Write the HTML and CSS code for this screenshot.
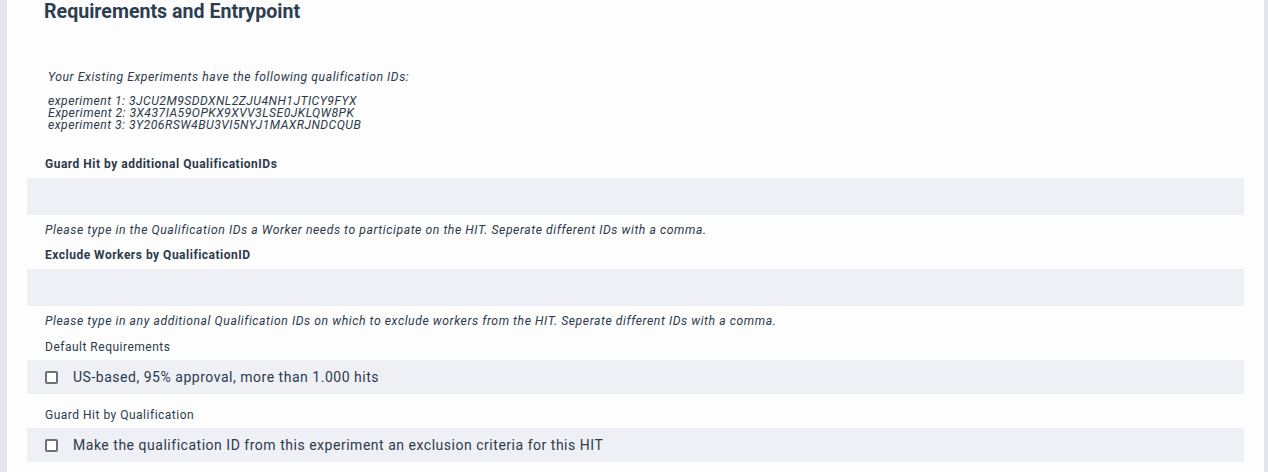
FILE: index.html
```html
<!DOCTYPE html>
<html>
<head>
<meta charset="utf-8">
<link rel="stylesheet" href="styles.css">
</head>
<body>
<div class="page">
  <section class="card">
    <h2 class="title">Requirements and Entrypoint</h2>
    <div class="existing">
      <p class="existing-head">Your Existing Experiments have the following qualification IDs:</p>
      <p class="existing-list">experiment 1: 3JCU2M9SDDXNL2ZJU4NH1JTICY9FYX<br>Experiment 2: 3X437IA59OPKX9XVV3LSE0JKLQW8PK<br>experiment 3: 3Y206RSW4BU3VI5NYJ1MAXRJNDCQUB</p>
    </div>
    <div class="fields">
      <div class="field">
        <label class="field-label">Guard Hit by additional QualificationIDs</label>
        <div class="input"></div>
        <p class="help">Please type in the Qualification IDs a Worker needs to participate on the HIT. Seperate different IDs with a comma.</p>
      </div>
      <div class="field">
        <label class="field-label">Exclude Workers by QualificationID</label>
        <div class="input"></div>
        <p class="help">Please type in any additional Qualification IDs on which to exclude workers from the HIT. Seperate different IDs with a comma.</p>
      </div>
      <div class="check-group">
        <div class="group-label">Default Requirements</div>
        <div class="check-row"><span class="box"></span><span class="check-text">US-based, 95% approval, more than 1.000 hits</span></div>
      </div>
      <div class="check-group">
        <div class="group-label">Guard Hit by Qualification</div>
        <div class="check-row"><span class="box"></span><span class="check-text">Make the qualification ID from this experiment an exclusion criteria for this HIT</span></div>
      </div>
    </div>
  </section>
</div>
</body>
</html>
```

FILE: styles.css
```css
html, body {
  margin: 0;
  padding: 0;
  background: #e5e6ed;
  font-family: Roboto, "Liberation Sans", sans-serif;
  color: #2c3a4b;
}
.page {
  padding: 0 4px 0 7px;
  height: 472px;
  overflow: hidden;
}
.card {
  background: #fdfdfd;
  height: 100%;
  padding: 0 20px;
  box-sizing: border-box;
}
.title {
  margin: 0;
  padding: 0 0 0 17px;
  font-size: 19.6px;
  font-weight: 700;
  line-height: 24px;
  color: #2c3e50;
}
.existing {
  padding: 46px 0 0 21px;
  font-style: italic;
  font-size: 12.2px;
  color: #2c3a4b;
}
.existing p { margin: 0; }
.existing-head { line-height: 14px; letter-spacing: 0.55px; }
.existing-list { margin-top: 11px !important; line-height: 12px; letter-spacing: 0.46px; }
.fields {
  margin-top: 25px;
}
.field-label {
  display: block;
  padding: 0 0 6px 18px;
  font-size: 12px;
  font-weight: 700;
  line-height: 16px;
  letter-spacing: 0.5px;
  color: #2c3a4b;
}
.input {
  height: 37px;
  background: #eff0f5;
}
.help {
  margin: 0;
  padding: 7px 0 9px 18px;
  font-size: 12.2px;
  font-style: italic;
  line-height: 16px;
  letter-spacing: 0.565px;
  color: #2c3a4b;
}
.check-group + .check-group { margin-top: 12px; }
.group-label {
  padding: 1px 0 5px 18px;
  font-size: 12px;
  line-height: 16px;
  letter-spacing: 0.5px;
  color: #2c3a4b;
}
.check-row {
  height: 34px;
  background: #eff0f5;
  display: flex;
  align-items: center;
  padding-left: 18px;
}
.box {
  width: 9px;
  height: 9px;
  border: 2px solid #6e6f78;
  border-radius: 2px;
  background: #fff;
  flex: none;
  margin-top: 1px;
}
.check-text {
  margin-left: 15px;
  font-size: 14px;
  line-height: 20px;
  letter-spacing: 0.52px;
  color: #2c3a4b;
}
```
